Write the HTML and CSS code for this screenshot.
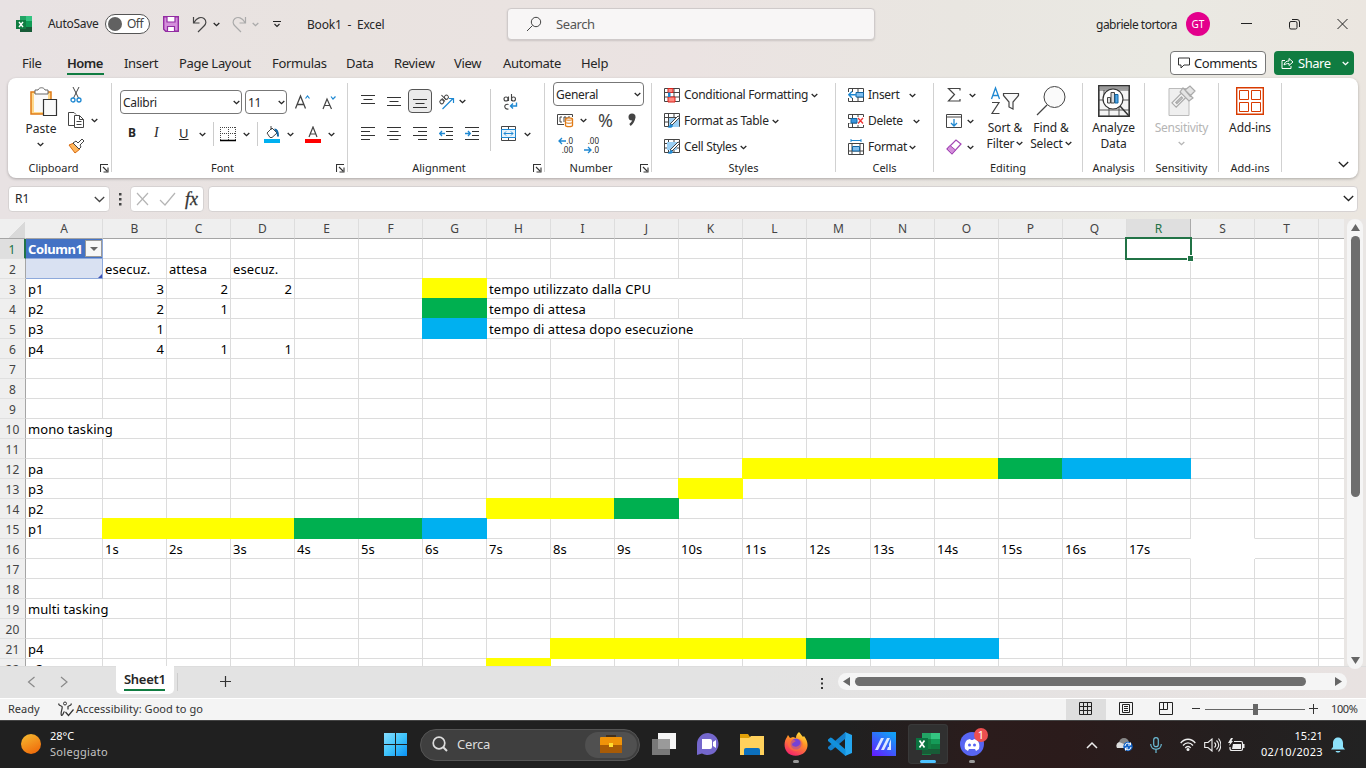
FILE: index.html
```html
<!DOCTYPE html>
<html lang="en">
<head>
<meta charset="utf-8">
<title>Book1 - Excel</title>
<link rel="stylesheet" href="styles.css">
</head>
<body>
<svg class="defs">
<symbol id="chev" viewBox="0 0 7 5"><path d="M.7 1 3.5 3.7 6.3 1" fill="none" stroke="currentColor" stroke-width="1.3"/></symbol>
<symbol id="launch" viewBox="0 0 9 9"><path d="M.5 8V.5H8M3 3l4 4M8 3.5V8H3.5" fill="none" stroke="#333" stroke-width="1.1"/></symbol>
<symbol id="grid" viewBox="0 0 16 15"><path d="M.5.5h15v13H.5zM.5 4.5h15M.5 9h15M4.5.5v13M10 .5v13" fill="none" stroke="#444"/></symbol>
</svg>

<header class="title">
  <svg class="xl" width="16" height="16"><path d="M4 0h8v16H4z" fill="#148345"/><path d="M10 0h6v5h-6z" fill="#34c481"/><path d="M4 0h6v5H4z" fill="#22a465"/><path d="M10 5h6v6h-6z" fill="#109b55"/><path d="M4 11h12v5H4z" fill="#175b37"/><path d="M0 4h10v9H0z" fill="#107c41"/><path d="m3 6 4 5M7 6l-4 5" stroke="#fff" stroke-width="1.4"/></svg>
  <span class="autosave">AutoSave</span>
  <span class="toggle"><i></i>Off</span>
  <svg class="save" width="16" height="16"><path d="M.7.7h14.6v14.6H2.7l-2-2z" fill="#d48fdb" stroke="#932ca3" stroke-width="1.4"/><path d="M4 1v5h8V1M4.500 15v-4.500h7V15" fill="#fff" stroke="#932ca3" stroke-width="1.2"/></svg>
  <svg class="undo" width="16" height="17"><path d="M1.500 1v6h6M2 6.500C5 1.500 9 .5 12 2.500c3 2.500 2 5.500 0 7.500l-6 6" fill="none" stroke="#444" stroke-width="1.2"/></svg>
  <svg class="c1" width="7" height="5"><use href="#chev"/></svg>
  <svg class="redo" width="16" height="17"><path d="M14.500 1v6h-6M14 6.500C11 1.500 7 .5 4 2.500c-3 2.500-2 5.500 0 7.500l6 6" fill="none" stroke="#aaa" stroke-width="1.2"/></svg>
  <svg class="c2" width="7" height="5"><use href="#chev"/></svg>
  <svg class="qat" width="9" height="7"><path d="M0 .5h8M1.500 3 4 5.500 6.500 3" fill="none" stroke="#222" stroke-width="1.1"/></svg>
  <span class="book">Book1&nbsp; -&nbsp; Excel</span>
  <div class="search"><svg width="17" height="17"><circle cx="10" cy="6" r="4.700" fill="none" stroke="#444"/><path d="M6.500 9.500 1 15" stroke="#444"/></svg><span>Search</span></div>
  <span class="user">gabriele tortora</span><span class="avatar">GT</span>
  <svg class="win" width="108" height="12"><path d="M0 5.500h11M96.500 1l10 10M106.500 1l-10 10" stroke="#222" fill="none"/><rect x="48.500" y="3.500" width="7.500" height="7.500" rx="1.500" fill="none" stroke="#222"/><path d="M51 1.500h5q2.500 0 2.500 2.500v5" fill="none" stroke="#222"/></svg>
</header>

<nav class="tabs">
  <span>File</span><span class="on">Home</span><span>Insert</span><span>Page Layout</span><span>Formulas</span><span>Data</span><span>Review</span><span>View</span><span>Automate</span><span>Help</span>
  <button class="comments"><svg width="12" height="12"><path d="M.5 1h11v7H6l-3 3V8H.500z" fill="none" stroke="#333"/></svg>Comments</button>
  <button class="share"><svg width="13" height="12"><path d="M4 3.500H1v8h9V9M3 8c.5-3 2.500-4 5-4V1.500L12 5 8 8.500V6.500C6 6.500 4.500 7 3 8z" fill="none" stroke="#fff"/></svg>Share<svg width="7" height="5"><use href="#chev"/></svg></button>
</nav>

<section class="ribbon">
  <div class="group g-clip">
    <div class="body">
      <div class="paste"><svg width="28" height="30"><path d="M1 5h20v22H1z" fill="#ffd98c" stroke="#e07b16" stroke-width="1.500"/><path d="M4 7h14v18H4z" fill="#fafafa"/><path d="M5 7V3h3c1-3 6-3 7 0h3v4z" fill="#fff" stroke="#666"/><path d="M13.500 12.500h13v16h-13z" fill="#fafafa" stroke="#333" stroke-width="1.200"/></svg><span>Paste</span><svg width="7" height="5"><use href="#chev"/></svg></div>
      <div class="clipcol">
        <svg width="12" height="16"><path d="M3 0l5.500 11M9 0 3.500 11" stroke="#444" fill="none"/><circle cx="3" cy="13" r="2" fill="#fff" stroke="#1e88d2" stroke-width="1.300"/><circle cx="9" cy="13" r="2" fill="#fff" stroke="#1e88d2" stroke-width="1.300"/></svg>
        <div class="copy"><svg width="17" height="17"><path d="M6 13.500H.500V.5H6l2 2M6.500 3.500h5l4 4v8h-9zM11.500 3.500v4h4M8.500 9.500h5M8.500 12.500h5" fill="none" stroke="#444"/></svg><svg width="7" height="5"><use href="#chev"/></svg></div>
        <svg width="17" height="16"><path d="m1 7 5-2 6 6-5 4z" fill="#ffb65c" stroke="#d8690e"/><path d="m5 5 3-2 2 2 4-4 2 2-4 4 1 2-2 2z" fill="#fff" stroke="#444"/></svg>
      </div>
    </div>
    <div class="label">Clipboard<svg width="9" height="9"><use href="#launch"/></svg></div>
  </div>

  <div class="group g-font">
    <div class="body">
      <div class="row f1"><span class="select">Calibri<svg width="7" height="5"><use href="#chev"/></svg></span><span class="select">11<svg width="7" height="5"><use href="#chev"/></svg></span>
      <svg width="17" height="16"><path d="M.500 14.500 5.500 2l5 12.500M2.500 10.500h6" fill="none" stroke="#444" stroke-width="1.300"/><path d="m10.500 4.500 2-2.500L14.500 4.500" fill="none" stroke="#1e88d2" stroke-width="1.200"/></svg>
      <svg width="16" height="16"><path d="M1 15 5 5l4.500 10M3 11.500h5" fill="none" stroke="#444" stroke-width="1.200"/><path d="m9 2.500 2 2.500 2.500-2.500" fill="none" stroke="#1e88d2" stroke-width="1.200"/></svg></div>
      <div class="row f2"><b>B</b><em>I</em><u>U</u><svg width="7" height="5"><use href="#chev"/></svg><i class="vr"></i>
      <svg width="16" height="16"><path d="M.500 1v13M15.500 1v13M8.500 1v13M0 1.500h16M0 7.500h16" stroke="#444" stroke-dasharray="1 1"/><path d="M0 14.500h16" stroke="#000" stroke-width="1.500"/></svg><svg width="7" height="5"><use href="#chev"/></svg><i class="vr"></i>
      <svg width="16" height="17"><path d="m3 7 5-5 5 5-5 4.500H6zM7 0v4" fill="none" stroke="#444"/><path d="M10.500 3.500c3 0 3.500 3 3.500 7" fill="none" stroke="#1266a3" stroke-width="2"/><path d="M0 13h16v4H0z" fill="#00b0f0"/></svg><svg width="7" height="5"><use href="#chev"/></svg>
      <svg width="16" height="17"><path d="M4 11 8 1l4 10M5.500 8h5" fill="none" stroke="#444" stroke-width="1.200"/><path d="M0 13h16v4H0z" fill="red"/></svg><svg width="7" height="5"><use href="#chev"/></svg></div>
    </div>
    <div class="label">Font<svg width="9" height="9"><use href="#launch"/></svg></div>
  </div>

  <div class="group g-align">
    <div class="body">
      <div class="al">
        <div class="row a1"><svg width="14" height="14"><path d="M0 1.500h14M2.500 5.500h9M0 9.500h14" stroke="#333"/></svg><svg width="14" height="14"><path d="M0 3.500h14M2.500 7.500h9M0 11.500h14" stroke="#333"/></svg><span class="picked"><svg width="14" height="14"><path d="M0 5.500h14M2.500 9.500h9M0 13.500h14" stroke="#333"/></svg></span>
        <svg width="17" height="17"><g transform="rotate(-45 7 7)" fill="none" stroke="#444"><circle cx="3.500" cy="6" r="2"/><path d="M6 3.500V8M8 1v7"/><circle cx="10" cy="6" r="2"/></g><path d="M4.500 16 15 5.500M11 5.500h4.500V10" fill="none" stroke="#1e88d2" stroke-width="1.200"/></svg><svg width="7" height="5"><use href="#chev"/></svg></div>
        <div class="row a2"><svg width="14" height="14"><path d="M0 1.500h14M0 5.500h9M0 9.500h14M0 13.500h9" stroke="#333"/></svg><svg width="14" height="14"><path d="M0 1.500h14M2.500 5.500h9M0 9.500h14M2.500 13.500h9" stroke="#333"/></svg><svg width="14" height="14"><path d="M0 1.500h14M5 5.500h9M0 9.500h14M5 13.500h9" stroke="#333"/></svg>
        <svg width="15" height="14"><path d="M0 1.500h14M7 5.500h7M7 9.500h7M0 13.500h14" stroke="#333"/><path d="M6 7.500H.800M3 5 .700 7.500 3 10" fill="none" stroke="#1e88d2" stroke-width="1.300"/></svg><svg width="15" height="14"><path d="M0 1.500h14M7 5.500h7M7 9.500h7M0 13.500h14" stroke="#333"/><path d="M0 7.500h5.300M3 5l2.300 2.500L3 10" fill="none" stroke="#1e88d2" stroke-width="1.300"/></svg></div>
      </div>
      <div class="ar">
        <svg class="wrap" width="16" height="17"><g fill="none" stroke="#444" stroke-width="1.100"><circle cx="3" cy="5" r="2"/><path d="M5.500 2.500V7M8.500 0v7M5.500 10.500c-5-1.500-5 5.500 0 4.500"/><circle cx="10.500" cy="5" r="2"/></g><path d="M13.500 8.500v3.500H7.500M10 9.500 7.500 12l2.500 2.500" fill="none" stroke="#1e88d2" stroke-width="1.400"/></svg>
        <div class="row"><svg width="16" height="16"><path d="M.500.500h14v14H.500zM.500 3.500h14M.500 11.500h14M7.500.500v3M7.500 11.500v3" fill="none" stroke="#444"/><path d="M.500 3.500h14v8H.500z" fill="#e7f3fb" stroke="#1e88d2"/><path d="M3 7.500h9M5 5.500l-2 2 2 2M10 5.500l2 2-2 2" fill="none" stroke="#1e88d2"/></svg><svg width="7" height="5"><use href="#chev"/></svg></div>
      </div>
    </div>
    <div class="label">Alignment<svg width="9" height="9"><use href="#launch"/></svg></div>
  </div>

  <div class="group g-num">
    <div class="body">
      <span class="select">General<svg width="7" height="5"><use href="#chev"/></svg></span>
      <div class="row n1"><svg width="17" height="15"><path d="M15.500 4V1.500H.500v10H7M5 4H3v5h2M7 9V4h2v3M11 6V4h2" fill="none" stroke="#444"/><path d="M8.500 6c0-1.500 7-1.500 7 0v6.500c0 1.500-7 1.500-7 0z" fill="#fff" stroke="#e07b16" stroke-width="1.300"/><path d="M8.500 6.500c1 1 6 1 7 0M8.500 9.500c1 1 6 1 7 0" fill="none" stroke="#e07b16"/></svg><svg width="7" height="5"><use href="#chev"/></svg><span class="pct">%</span><svg width="9" height="14"><circle cx="4" cy="4" r="3.500" fill="#444"/><path d="M6 4c0 4-1.500 6-4 8" fill="none" stroke="#444" stroke-width="2.300"/></svg></div>
      <div class="row n2"><div class="dec"><span><svg width="8" height="8"><path d="M8 4H1M4 1 1 4l3 3" fill="none" stroke="#1e88d2" stroke-width="1.300"/></svg>.0</span><span>.00</span></div><div class="dec"><span>.00</span><span><svg width="8" height="8"><path d="M0 4h7M4 1l3 3-3 3" fill="none" stroke="#1e88d2" stroke-width="1.300"/></svg>.0</span></div></div>
    </div>
    <div class="label">Number<svg width="9" height="9"><use href="#launch"/></svg></div>
  </div>

  <div class="group g-styles">
    <div class="body list">
      <div><svg width="16" height="15"><use href="#grid" width="16" height="15"/><path d="M4 .500h5v4H4zM4 9h7v5H4z" fill="#ff8a80" stroke="#d8231c"/><path d="M4 4.500h2.500V9H4z" fill="#1e88d2"/></svg><span>Conditional Formatting</span><svg width="7" height="5"><use href="#chev"/></svg></div>
      <div><svg width="17" height="16"><use href="#grid" width="16" height="15"/><path d="M5 5h10v9H5z" fill="#9cd0f5"/><path d="m16 4-8 8-2-1 8-8z" fill="#fff" stroke="#444"/><path d="M3.500 14c2 0 2-3 4-3l1.500 2c-1 2-3.500 2.500-5.500 1z" fill="#1e88d2"/></svg><span>Format as Table</span><svg width="7" height="5"><use href="#chev"/></svg></div>
      <div><svg width="17" height="16"><use href="#grid" width="16" height="15"/><path d="M3 3h10v8H3z" fill="#9cd0f5"/><path d="m16 4-8 8-2-1 8-8z" fill="#fff" stroke="#444"/><path d="M3.500 14c2 0 2-3 4-3l1.500 2c-1 2-3.500 2.500-5.500 1z" fill="#1e88d2"/></svg><span>Cell Styles</span><svg width="7" height="5"><use href="#chev"/></svg></div>
    </div>
    <div class="label">Styles</div>
  </div>

  <div class="group g-cells">
    <div class="body list">
      <div><svg width="16" height="15"><use href="#grid" width="16" height="15"/><path d="M0 4h9v6H0z" fill="#fff"/><path d="M8 4.500h7.500V9H8z" fill="#80bff0" stroke="#1266a3"/><path d="M8 6.800H1M4 3.500.800 6.800 4 10" fill="none" stroke="#1e88d2" stroke-width="1.400"/></svg><span>Insert</span><svg width="7" height="5"><use href="#chev"/></svg></div>
      <div><svg width="16" height="15"><use href="#grid" width="16" height="15"/><path d="M0 5h3v4H0zM9 3h7v8H9z" fill="#fff"/><path d="M3 4.500h6V9H3z" fill="#3a96dd" stroke="#1266a3"/><path d="m10 4 5 5.500M15 4l-5 5.500" stroke="#e33" stroke-width="1.300"/></svg><span>Delete</span><svg width="7" height="5"><use href="#chev"/></svg></div>
      <div><svg width="16" height="17"><path d="M3 1.500h10M3 0v3M13 0v3" stroke="#1e88d2"/><path d="M.500 4.500h15v11H.500zM.500 12h15M4 4.500v11M12 4.500v11" fill="none" stroke="#444"/><path d="M4.500 7.500h7V12h-7z" fill="#80bff0" stroke="#1266a3"/></svg><span>Format</span><svg width="7" height="5"><use href="#chev"/></svg></div>
    </div>
    <div class="label">Cells</div>
  </div>

  <div class="group g-edit">
    <div class="body">
      <div class="list ecol">
        <div><svg width="18" height="16"><path d="M14 3.500V1.500H2.500l6 6-6 6.500H14v-2" fill="none" stroke="#444" stroke-width="1.200"/></svg><svg width="7" height="5"><use href="#chev"/></svg></div>
        <div><svg width="16" height="15"><path d="M.500.500h15v13H.500zM.500 3h15" fill="none" stroke="#444"/><path d="M8 5v7M5 9l3 3 3-3" fill="none" stroke="#1e88d2" stroke-width="1.300"/></svg><svg width="7" height="5"><use href="#chev"/></svg></div>
        <div><svg width="16" height="16"><path d="m1 10 9-9 5 4-9 10z" fill="#fff" stroke="#a347b5" stroke-width="1.200"/><path d="m1 10 3-3.500 5.500 4.500L6 15z" fill="#d48fdb" stroke="#a347b5"/></svg><svg width="7" height="5"><use href="#chev"/></svg></div>
      </div>
      <div class="big sort"><svg width="30" height="32"><path d="M1.500 14 5.500 3l4 11M3 10.500h5.500" fill="none" stroke="#1e88d2" stroke-width="1.300"/><path d="M2 17.500h7L2 28.500h7.500" fill="none" stroke="#444" stroke-width="1.200"/><path d="M13.500 8.500h15v2L23 17v7l-4-2v-5l-5.500-6.500z" fill="#fafafa" stroke="#444" stroke-width="1.200"/></svg><span>Sort &amp;</span><span>Filter <svg width="7" height="5"><use href="#chev"/></svg></span></div>
      <div class="big find"><svg width="30" height="32"><circle cx="18.500" cy="12" r="10.500" fill="#fafafa" stroke="#444"/><path d="M11 20 1 30" stroke="#444" stroke-width="1.200"/></svg><span>Find &amp;</span><span>Select <svg width="7" height="5"><use href="#chev"/></svg></span></div>
    </div>
    <div class="label">Editing</div>
  </div>

  <div class="group g-an"><div class="body"><div class="big"><svg width="32" height="32"><path d="M1 1h30v30H1zM1 5h30M1 15h30M1 25h30M11 22v9M21 22v9M6 5v10" fill="#f4f4f4" stroke="#555"/><path d="M0 1.500h32v3H0z" fill="#999"/><path d="M.700.700h30.600v30.600H.700z" fill="none" stroke="#333" stroke-width="1.300"/><circle cx="15" cy="14" r="10" fill="#fff" stroke="#333" stroke-width="1.200"/><path d="m22 21 9 10" stroke="#333" stroke-width="1.500"/><path d="M9.500 12.500h3V18h-3zM13 7.500h3.500V18H13z" fill="#ddd" stroke="#444"/><path d="M17 9.500h3V18h-3z" fill="#51a7e8" stroke="#1266a3"/></svg><span>Analyze</span><span>Data</span></div></div><div class="label">Analysis</div></div>
  <div class="group g-sens"><div class="body"><div class="big"><svg width="28" height="32"><path d="M1 3.500h20v27H1z" fill="#efefef" stroke="#bbb"/><g transform="rotate(-45 11 15)" fill="#f4f4f4" stroke="#aaa" stroke-width="1.200"><path d="M4 12h14v6H4zM7 14.500h8v1.500H7z"/></g><path d="m12 7 3-4 10 10-4 3zM17 5l5-4 5 5-5 5z" fill="#e4e4e4" stroke="#aaa" stroke-width="1.200"/></svg><span>Sensitivity</span><svg width="7" height="5"><use href="#chev"/></svg></div></div><div class="label">Sensitivity</div></div>
  <div class="group g-add"><div class="body"><div class="big"><svg width="28" height="32"><path d="M.700 2.700h26.600v26.600H.700z" fill="#fff" stroke="#d83b01" stroke-width="1.400"/><path d="M3.500 5.500h9v9h-9zM15.500 5.500h9v9h-9zM3.500 17.500h9v9h-9zM15.500 17.500h9v9h-9z" fill="none" stroke="#d83b01"/></svg><span>Add-ins</span></div></div><div class="label">Add-ins</div></div>
  <svg class="collapse" width="11" height="7"><path d="m.800 1 4.700 4.500L10.200 1" fill="none" stroke="#222" stroke-width="1.300"/></svg>
</section>

<section class="fbar">
  <div class="namebox">R1<svg width="11" height="7"><path d="m.800 1 4.700 4.500L10.200 1" fill="none" stroke="#444" stroke-width="1.300"/></svg></div>
  <svg class="dots" width="3" height="13"><path d="M0 0h2.500v2.500H0zM0 5h2.500v2.500H0zM0 10h2.500v2.500H0z" fill="#444"/></svg>
  <div class="fx"><svg width="40" height="14"><path d="m1 1 11 12M12 1 1 13M24 8l5 5L39 1" fill="none" stroke="#b5b5b5" stroke-width="1.200"/></svg><i>fx</i></div>
  <div class="formula"><svg width="11" height="7"><path d="m.800 1 4.700 4.500L10.200 1" fill="none" stroke="#222" stroke-width="1.300"/></svg></div>
</section>

<main class="main">
  <div class="sheet" id="sheet"></div>
  <div class="vscroll"><svg width="9" height="7"><path d="M4.500 0 9 7H0z" fill="#666"/></svg><i></i><svg class="dn" width="9" height="7"><path d="M4.500 7 9 0H0z" fill="#666"/></svg></div>
</main>

<footer class="sheettabs">
  <svg class="navs" width="42" height="12"><path d="M7.500 1 1.500 6l6 5M34 1l6 5-6 5" fill="none" stroke="#8a8a8a" stroke-width="1.200"/></svg>
  <div class="stab"><span>Sheet1</span></div>
  <i class="sep"></i>
  <svg class="plus" width="12" height="12"><path d="M0 5.500h11M5.500 0v11" stroke="#333" stroke-width="1.200"/></svg>
  <svg class="dots2" width="2" height="11"><path d="M0 0h2v2H0zM0 4.500h2v2H0zM0 9h2v2H0z" fill="#333"/></svg>
  <div class="hscroll"><svg width="7" height="9"><path d="M0 4.500 7 0v9z" fill="#666"/></svg><i></i><svg width="7" height="9"><path d="M7 4.500 0 0v9z" fill="#666"/></svg></div>
</footer>

<footer class="status">
  <span class="ready">Ready</span>
  <svg width="16" height="16"><circle cx="7" cy="2.500" r="1.500" fill="none" stroke="#333"/><path d="M1 2.500c-1 2 2 2 3 3 1 2-2 6-.500 9 2 0 1.500-3 3-4M13 2.500c1 2-2 2-3 3v3M7.500 11l3 3.500 5-6" fill="none" stroke="#333" stroke-width="1.200"/></svg>
  <span class="acc">Accessibility: Good to go</span>
  <span class="view on"><svg width="13" height="13"><path d="M.500.500h12v12H.500zM.500 4.500h12M.500 8.500h12M4.500.500v12M8.500.500v12" fill="none" stroke="#222"/></svg></span>
  <span class="view"><svg width="14" height="13"><path d="M.500.500h13v12H.500zM3.500 2.500h7v8h-7zM5 4.500h4M5 6.500h4M5 8.500h4" fill="none" stroke="#222"/></svg></span>
  <span class="view"><svg width="14" height="13"><path d="M.500.500h13v12H.500zM.500 7.500h8v-7M4.500.500v7" fill="none" stroke="#222"/></svg></span>
  <svg class="zoom" width="127" height="12"><path d="M0 5.500h8M121.500 1v10M117 5.500h9" stroke="#333"/><path d="M13 6.500h100" stroke="#666"/><path d="M61 1h5v11h-5z" fill="#666"/></svg>
  <span class="zp">100%</span>
</footer>

<footer class="taskbar">
  <svg class="sun" width="20" height="20"><defs><linearGradient id="sg" x2=".5" y2="1"><stop stop-color="#f5bd32"/><stop offset="1" stop-color="#f0700d"/></linearGradient></defs><circle cx="10" cy="10" r="10" fill="url(#sg)"/></svg>
  <div class="weather"><span>28°C</span><span>Soleggiato</span></div>
  <svg class="start" width="24" height="24"><defs><linearGradient id="wg" x2="1" y2="1"><stop stop-color="#85dcff"/><stop offset=".5" stop-color="#3fc4fb"/><stop offset="1" stop-color="#0a91f5"/></linearGradient></defs><path d="M0 0h11v11H0zM12 0h11v11H12zM0 12h11v11H0zM12 12h11v11H12z" fill="url(#wg)"/></svg>
  <div class="tsearch"><svg width="16" height="16"><circle cx="7" cy="7" r="5.800" fill="none" stroke="#ddd" stroke-width="1.700"/><path d="m11 11 4 4" stroke="#ddd" stroke-width="2"/></svg><span>Cerca</span><div><svg width="22" height="18"><path d="M7 3V1h8v2" fill="none" stroke="#42301d" stroke-width="2"/><rect y="2" width="22" height="16" rx="1" fill="#ef9309"/><path d="M0 10h22v8H0z" fill="#a85b06"/><path d="M9 8h4v4H9z" fill="#ffdc31"/></svg></div></div>
  <div class="apps">
    <span><svg width="24" height="24"><path d="M6 1h18v16H6z" fill="#f5f5f5"/><path d="M0 7h18v16H0z" fill="#8a8a8a" opacity=".85"/></svg></span>
    <span><svg width="24" height="24"><path d="M12 1a11 11 0 1 1-6 20.500L1 23V12A11 11 0 0 1 12 1z" fill="#7467cc"/><path d="M6 7h8q2 0 2 2v6q0 2-2 2H6zM17 10l3-2v8l-3-2z" fill="#fff"/></svg></span>
    <span><svg width="24" height="24"><path d="M0 2h8l2 3h14v18H0z" fill="#e1a008"/><path d="M0 6h9l2-2h13v19H0z" fill="#ffd15c"/><path d="M4 23v-5q0-2 2-2h12q2 0 2 2v5z" fill="#0c70be"/></svg></span>
    <span class="run"><svg width="24" height="24"><defs><linearGradient id="fg" x1=".8" x2=".3" y2="1"><stop stop-color="#ffe93f"/><stop offset=".4" stop-color="#ff9526"/><stop offset="1" stop-color="#f5226d"/></linearGradient></defs><path d="M15 0c2 2 3 4 4 5l1-1c4 5 5 11 1 16-5 5-14 5-18 0C-.500 16 0 9 3 5l1-2 2 3 3-1 3 1c0-3 1-4 3-6z" fill="url(#fg)"/><circle cx="12" cy="12" r="5.500" fill="#7542d5"/><path d="M4 7c4-1 5 1 8 2l-3 2c-3 2 2 5 5 3 4-2 2-6 0-7 5 0 6 6 4 9-5 6-13 2-14-3z" fill="#ff7139" opacity=".6"/></svg></span>
    <span><svg width="24" height="24"><path d="m17 0 7 3v18l-7 3z" fill="#25a7f0"/><path d="M17.500 0v6.500L4 18l-1.500.500L0 16.500V15z" fill="#1480cc"/><path d="M17.500 24v-6.500L4 6l-1.500-.500L0 7.500V9z" fill="#1290dc"/></svg></span>
    <span><svg width="24" height="24"><defs><linearGradient id="mg" x2=".7" y1="1" y2="0"><stop stop-color="#6617ff"/><stop offset="1" stop-color="#139df6"/></linearGradient></defs><path d="M0 0h24v24H0z" fill="url(#mg)"/><path d="m3 18 6-12h3L6 18zM9 18l6-12h3l-6 12zM17 12l2-5v11h-4l1-3h1z" fill="#dce7ff"/></svg></span>
    <span class="active"><svg width="24" height="24"><path d="M6 1h9v22H6z" fill="#148345"/><path d="M15 1h9v6h-9z" fill="#34c481"/><path d="M6 1h9v6H6z" fill="#22a465"/><path d="M15 7h9v5h-9z" fill="#159b58"/><path d="M6 17h18v5H6z" fill="#185c37"/><path d="M15 12h9v5h-9z" fill="#107c41"/><path d="M0 6h12v12H0z" fill="#0b7340"/><path d="m3.500 8.500 5 7M8.500 8.500l-5 7" stroke="#fff" stroke-width="1.700"/></svg></span>
    <span class="run discord"><svg width="24" height="24"><circle cx="12" cy="12" r="12" fill="#5865f2"/><path d="M5 17c-1-4 0-7 2-9l3-1 1 1h2l1-1 3 1c2 2 3 5 2 9l-3 2-1-2H9l-1 2z" fill="#fff"/><circle cx="9.500" cy="13" r="1.500" fill="#5865f2"/><circle cx="14.500" cy="13" r="1.500" fill="#5865f2"/></svg><b>1</b></span>
  </div>
  <svg class="up" width="12" height="8"><path d="m1 7 5-5 5 5" fill="none" stroke="#eee" stroke-width="1.500"/></svg>
  <svg class="cloud" width="18" height="15"><circle cx="8" cy="6" r="5" fill="#888"/><path d="M1 11q-2-4 2-6l5 2 4 1v3z" fill="#ddd"/><circle cx="12" cy="9.500" r="4.700" fill="#1464c8"/><path d="M9 9a3 3 0 0 1 5.500-1.500M15 10a3 3 0 0 1-5.500 1.500M14.500 5.500v2.500H12M9.500 13.500V11H12" fill="none" stroke="#fff"/></svg>
  <svg class="mic" width="12" height="16"><rect x="3.700" y=".7" width="4.600" height="9" rx="2.300" fill="none" stroke="#6cbcd6" stroke-width="1.200"/><path d="M.700 7c0 7 10.600 7 10.600 0M6 12.500V16" fill="none" stroke="#6cbcd6" stroke-width="1.200"/></svg>
  <svg class="wifi" width="16" height="13"><path d="M.700 5c4-5 10.600-5 14.600 0M3 7.500c3-3.500 7-3.500 10 0M5.300 10c1.500-2 4-2 5.400 0" fill="none" stroke="#eee" stroke-width="1.300"/><circle cx="8" cy="11.500" r="1.500" fill="#eee"/></svg>
  <svg class="vol" width="17" height="14"><path d="M.700 4.500H4L8 1v12L4 9.500H.700zM10.500 4.500c1.500 1.500 1.500 3.500 0 5M12.500 2.500c3 3 3 6 0 9M14.500.500c3 4 3 9 0 13" fill="none" stroke="#eee" stroke-width="1.100"/></svg>
  <svg class="bat" width="17" height="14"><path d="M6 3.500h7q1.500 0 1.500 1.500v6q0 1.500-1.500 1.500H4q-2 0-2-2V9" fill="none" stroke="#eee" stroke-width="1.200"/><path d="M5 6h8v5H4zM15 6h1.500v4H15zM3 0 0 5h2L1 8l4-5H3.500L5 0z" fill="#eee"/></svg>
  <div class="clock"><span>15:21</span><span>02/10/2023</span></div>
  <svg class="bell" width="14" height="16"><path d="M0 12.500 2 10V6C2-1.500 12-1.500 12 6v4l2 2.500zM4.500 14h5c-1 2-4 2-5 0z" fill="#8de2fb"/></svg>
</footer>
<script src="sheet.js"></script>
</body>
</html>
```
FILE: sheet.js
```js
const letters = "ABCDEFGHIJKLMNOPQRST".split("").concat("");
const cells = {
  A1: "Column1", B2: "esecuz.", C2: "attesa", D2: "esecuz.",
  A3: "p1", B3: 3, C3: 2, D3: 2, A4: "p2", B4: 2, C4: 1, A5: "p3", B5: 1,
  A6: "p4", B6: 4, C6: 1, D6: 1,
  H3: "tempo utilizzato dalla CPU", H4: "tempo di attesa", H5: "tempo di attesa dopo esecuzione",
  A10: "mono tasking", A12: "pa", A13: "p3", A14: "p2", A15: "p1",
  A19: "multi tasking", A21: "p4", A22: "p3"
};
for (let i = 1; i < 18; i++) cells[letters[i] + 16] = i + "s";

// row, first column, last column, colour
const fills = [
  [3, "G", "G", "yellow"], [4, "G", "G", "green"], [5, "G", "G", "blue"],
  [12, "L", "O", "yellow"], [12, "P", "P", "green"], [12, "Q", "R", "blue"],
  [13, "K", "K", "yellow"], [14, "H", "I", "yellow"], [14, "J", "J", "green"],
  [15, "B", "D", "yellow"], [15, "E", "F", "green"], [15, "G", "G", "blue"],
  [21, "I", "L", "yellow"], [21, "M", "M", "green"], [21, "N", "O", "blue"],
  [22, "H", "H", "yellow"]
];
// cells whose right gridline is covered by neighbouring text
const open = ["H3", "I3", "J3", "H4", "H5", "I5", "J5", "K5", "A10", "A19", "R16", "S16"];
const noBottom = ["S15", "S16"];

const sheet = document.getElementById("sheet");
const add = (parent, tag, cls, text) => {
  const el = document.createElement(tag);
  el.className = cls;
  if (text !== undefined) el.textContent = text;
  parent.appendChild(el);
  return el;
};
const head = add(sheet, "div", "line head");
add(head, "span", "corner");
letters.forEach(l => add(head, "span", l === "R" ? "col sel" : "col", l));
for (let r = 1; r <= 22; r++) {
  const line = add(sheet, "div", "line");
  add(line, "span", r === 1 ? "num sel" : "num", r);
  letters.forEach(l => {
    const key = l + r, v = cells[key];
    const c = add(line, "span", "cell");
    const fill = l && fills.find(f => f[0] === r && l >= f[1] && l <= f[2]);
    if (fill) c.classList.add(fill[3]);
    if (typeof v === "number") c.classList.add("right");
    if (open.includes(key)) c.classList.add("open");
    if (noBottom.includes(key)) c.classList.add("nobottom");
    if (key === "A1") c.classList.add("th");
    if (key === "A2") c.classList.add("tb");
    if (key === "R1") c.classList.add("cursor");
    if (v !== undefined) add(c, "span", "val", v);
    if (key === "A1") add(c, "i", "filter");
  });
}
```
FILE: styles.css
```css
* { box-sizing: border-box; }
body { margin: 0; width: 1366px; height: 768px; overflow: hidden; font: 12px/16px "Noto Sans", "Open Sans", sans-serif; color: #262626; background: linear-gradient(90deg, #e8e2e3 0, #e9e3e0 25%, #ebe3e2 50%, #e9e6e1 70%, #eae9e3 85%, #ebe6e0 100%); display: flex; flex-direction: column; }
svg { display: block; flex: none; }
.defs { display: none; }
span { white-space: nowrap; }
.title { height: 48px; display: flex; align-items: center; flex: none; padding-left: 16px; }
.autosave { width: 57px; margin-left: 16px; letter-spacing: -.3px; }
.toggle { width: 45px; height: 20px; border: 1px solid #555; border-radius: 10px; background: #fff; display: flex; align-items: center; padding-left: 2px; gap: 5px; letter-spacing: -.5px; color: #444; margin-top: -1px; }
.toggle i { width: 14px; height: 14px; border-radius: 50%; background: #616161; }
.save { margin-left: 13px; }
.undo { margin-left: 13px; }
.c1 { margin-left: 5px; }
.redo { margin-left: 11px; }
.c2 { margin-left: 5px; color: #aaa; }
.qat { margin-left: 14px; }
.book { margin-left: 25px; width: 201px; letter-spacing: -.2px; padding-top: 2px; }
.search { width: 368px; height: 32px; margin-left: -1px; background: #f8f6f6; border: 1px solid #cfcaca; border-radius: 4px; display: flex; align-items: center; padding-left: 18px; box-shadow: 0 1px 2px #0002; font-size: 13px; gap: 13px; color: #555; letter-spacing: -.4px; }
.user { margin-left: 221px; width: 90px; padding-top: 2px; letter-spacing: -.5px; }
.avatar { width: 24px; height: 24px; border-radius: 50%; background: #e3008c; color: #fff; font-size: 10px; line-height: 24px; text-align: center; }
.win { margin-left: 31px; }
.tabs { height: 30px; flex: none; display: grid; grid-template-columns: 45px 57px 55px 93px 74px 48px 60px 49px 78px 589px 104px auto; padding-left: 22px; font-size: 13px; line-height: 30px; letter-spacing: -.3px; }
.tabs .on { font-weight: 600; width: 37px; height: 27px; border-bottom: 2px solid #107c41; letter-spacing: -.5px; }
.tabs button { font: 13px "Noto Sans"; letter-spacing: -.45px; height: 24px; margin-top: 3px; border-radius: 4px; display: flex; align-items: center; padding: 0 7px; gap: 4px; }
.comments { width: 96px; border: 1px solid #777; background: #fff; color: #222; }
.share { width: 80px; background: #107c41; border: 0; color: #fff; }
.share svg:last-child { margin-left: 7px; }
.ribbon { height: 100px; flex: none; margin: 0 8px; background: #fff; border-radius: 8px; box-shadow: 0 1px 3px #0004; display: flex; padding-top: 5px; }
.group { height: 89px; border-right: 1px solid #d1d1d1; display: flex; flex-direction: column; flex: none; }
.body { height: 77px; display: flex; }
.label { height: 12px; line-height: 15px; font-size: 11px; text-align: center; position: relative; }
.label svg { position: absolute; right: 2px; top: 4px; }
.row { display: grid; align-items: center; height: 24px; }
.g-clip { width: 104px; }
.g-clip .label { padding-right: 12px; }
.paste { width: 60px; padding-left: 6px; display: flex; flex-direction: column; align-items: center; padding-top: 4px; }
.paste svg:first-child { margin-left: 6px; }
.paste span { margin: 5px 0 6px; line-height: 14px; }
.paste svg:last-child { margin-right: 2px; }
.clipcol { padding: 4px 0 0; display: flex; flex-direction: column; gap: 9px; }
.clipcol > svg:first-child { margin-left: 2px; }
.copy { display: flex; align-items: center; gap: 6px; }
.g-font { width: 236px; }
.g-font .label, .g-align .label, .g-num .label { padding-right: 14px; }
.g-font .body { flex-direction: column; padding: 7px 0 0 8px; gap: 8px; }
.f1 { grid-template-columns: 125px 50px 27px 20px; }
.f1 > svg { margin-top: -1px; }
.select { height: 24px; border: 1px solid #777; border-radius: 4px; padding: 0 2px; line-height: 21px; display: flex; justify-content: space-between; align-items: center; letter-spacing: -.3px; }
.f1 .select:nth-child(1) { width: 122px; padding-right: 1px; }
.f1 .select:nth-child(2) { width: 42px; padding-right: 1px; }
.f2 { grid-template-columns: 26px 25px 20px 14px 7px 23px 14px 7px 23px 18px 23px 8px; padding-left: 8px; font-size: 13px; }
.f2 > b, .f2 > em, .f2 > u { line-height: 22px; margin-top: -2px; }
.f2 b { font-size: 12px; }
.f2 em { font-family: "Liberation Serif", serif; font-size: 14px; }
.vr { width: 1px; height: 24px; background: #ccc; }
.g-align { width: 197px; }
.al { width: 143px; height: 62px; margin-top: 6px; border-right: 1px solid #ccc; padding: 0 0 0 13px; }
.a1 { grid-template-columns: 26px 21px 30px 21px 8px; }
.a2 { grid-template-columns: 26px 26px 26px 26px 15px; margin-top: 8px; }
.picked { width: 24px; height: 24px; border: 1px solid #555; border-radius: 4px; background: #ebebeb; padding: 4px; }
.ar { padding: 11px 0 0 10px; }
.ar .wrap { margin-left: 2px; }
.ar .row { grid-template-columns: 23px 8px; margin-top: 11px; }
.g-num { width: 107px; }
.g-num .body { flex-direction: column; padding-left: 8px; }
.g-num .select { width: 91px; margin-top: -1px; flex: none; }
.n1 { grid-template-columns: 23px 18px 30px 10px; padding-left: 4px; margin-top: 2px; }
.pct { font-size: 18px; color: #444; }
.n2 { grid-template-columns: 26px 20px; padding-left: 2px; margin-top: 1px; }
.dec { width: 18px; display: flex; flex-direction: column; align-items: flex-end; font-size: 8px; line-height: 8px; gap: 1px; }
.dec span { display: flex; }
.g-styles { width: 184px; }
.list { display: flex; flex-direction: column; }
.list > div { height: 26px; display: flex; align-items: center; gap: 4px; }
.g-styles .list, .g-cells .list { padding-left: 12px; margin-top: -1px; height: 78px; letter-spacing: -.3px; }
.g-styles .list > div { gap: 3px; }
.g-styles .list span { padding-left: 1px; }
.list svg:first-child { width: 16px; }
.g-cells { width: 98px; }
.g-cells .list > div { display: grid; grid-template-columns: 16px 37px 8px; }
.g-cells .list > div:nth-child(2) { grid-template-columns: 16px 41px 8px; }
.g-edit { width: 149px; }
.ecol { width: 48px; padding-left: 12px; margin-top: -1px; }
.ecol > div { gap: 7px; }
.ecol > div:not(:first-child) { gap: 5px; }
.big { display: flex; flex-direction: column; align-items: center; line-height: 16px; width: 46px; padding-top: 2px; letter-spacing: -.1px; }
.big > svg:first-child { margin-bottom: 3px; }
.big span svg { display: inline; vertical-align: 2px; margin-left: -1px; }
.g-an { width: 62px; }
.g-an .big { width: 61px; }
.g-sens { width: 74px; }
.g-sens .big { width: 73px; color: #b5b5b5; letter-spacing: -.3px; }
.g-sens .big svg:last-child { margin-top: 5px; }
.g-add { width: 63px; }
.g-add .big { width: 63px; }
.collapse { margin: 78px 0 0 56px; }
.fbar { height: 41px; flex: none; padding: 8px 8px 0; display: flex; }
.fbar > div { height: 26px; background: #fff; border: 1px solid #d6d2d2; border-radius: 4px; }
.namebox { width: 102px; display: flex; align-items: center; justify-content: space-between; padding: 0 4px 0 6px; }
.dots { margin: 7px 8px 0 9px; }
.fx { width: 74px; padding: 5px 0 0 5px; display: flex; gap: 9px; margin-right: 4px; }
.fx i { font: italic 18px/14px "Liberation Serif", serif; color: #333; -webkit-text-stroke: .3px #333; }
.formula { flex: 1; padding: 8px 3px 0; display: flex; justify-content: flex-end; }
.main { height: 447px; flex: none; display: flex; gap: 3px; background: #e9e6e4; }
.sheet { width: 1344px; height: 447px; overflow: hidden; background: #fff; }
.line { display: grid; grid-template-columns: 26px 77px repeat(20, 64px); grid-template-rows: 20px; height: 20px; width: 1500px; }
.head { color: #444; text-align: center; font-size: 12px; line-height: 19px; }
.head span { background: #efefef; border-right: 1px solid #ddd; border-bottom: 1px solid #a5a5a5; }
.head .sel { background: #dfdfdf; color: #217346; border-color: #aaa; }
.head .corner { background: linear-gradient(135deg, #efefef 62%, #d9d9d9 62%); border-right-color: #efefef; }
.num { background: #efefef; border-right: 1px solid #a5a5a5; border-bottom: 1px solid #e0e0e0; text-align: center; color: #444; line-height: 21px; letter-spacing: .2px; }
.num.sel { background: #dfdfdf; color: #217346; border-right: 2px solid #217346; }
.cell { border-right: 1px solid #dcdcdc; border-bottom: 1px solid #dcdcdc; padding: 0 2px; line-height: 21px; font-size: 13px; color: #000; position: relative; min-width: 0; }
.val { position: relative; z-index: 3; letter-spacing: .08px; }
.right { text-align: right; }
.open { border-right-color: transparent; }
.nobottom { border-bottom-color: transparent; }
.yellow { background: #ff0; border-color: #ff0; box-shadow: -1px -1px #ff0, 0 -1px #ff0, -1px 0 #ff0; }
.green { background: #00b050; border-color: #00b050; box-shadow: -1px -1px #00b050, 0 -1px #00b050, -1px 0 #00b050; }
.blue { background: #00b0f0; border-color: #00b0f0; box-shadow: -1px -1px #00b0f0, 0 -1px #00b0f0, -1px 0 #00b0f0; }
.th { background: #4472c4; border-color: #8ea9db; color: #fff; font-weight: 700; display: flex; justify-content: space-between; padding-right: 0; }
.th .val { letter-spacing: -.4px; }
.tb { background: #d9e1f2; border-color: #8ea9db; }
.tb::after { content: ""; position: absolute; right: 0; bottom: 0; border: 2px solid #3f51b5; border-left-color: transparent; border-top-color: transparent; }
.filter { width: 17px; height: 17px; margin-top: 1px; background: #f7f7f7; border: 1px solid #999; position: relative; flex: none; }
.filter::after { content: ""; position: absolute; left: 4px; top: 6px; border: 4px solid transparent; border-top-color: #666; border-bottom: 0; }
.cursor::before { content: ""; box-sizing: border-box; position: absolute; left: -2px; top: -2px; width: 67px; height: 23px; border: 2px solid #217346; z-index: 4; }
.cursor::after { content: ""; box-sizing: border-box; position: absolute; right: -4px; bottom: -4px; width: 7px; height: 7px; background: #217346; border: 1px solid #fff; z-index: 5; }
.vscroll { width: 16px; height: 450px; background: #f5f5f5; border-radius: 8px; display: flex; flex-direction: column; align-items: center; padding-top: 5px; position: relative; z-index: 2; }
.vscroll i { width: 9px; height: 261px; background: #6e6e6e; border-radius: 5px; margin: 5px 0 160px; }
.sheettabs { height: 33px; flex: none; background: linear-gradient(90deg, #e3e3e3 55%, #e8e2e1); border-top: 1px solid #ddd; border-bottom: 1px solid #fff; display: flex; }
.navs { margin: 9px 0 0 27px; }
.stab { width: 58px; height: 28px; margin-left: 47px; margin-top: -1px; background: #fff; border-radius: 0 0 5px 5px; padding: 5px 8px; }
.stab span { display: block; width: 41px; height: 20px; font-weight: 600; font-size: 13px; line-height: 17px; border-bottom: 2px solid #107c41; letter-spacing: -.3px; }
.sep { width: 1px; height: 18px; margin: 6px 0 0 3px; background: #ccc; }
.plus { margin: 9px 0 0 42px; }
.dots2 { margin: 11px 0 0 589px; }
.hscroll { margin: 6px 0 0 15px; width: 509px; height: 17px; border-radius: 9px; background: #f5f5f5; display: flex; align-items: center; padding-left: 5px; }
.hscroll i { width: 451px; height: 9px; background: #6e6e6e; border-radius: 5px; margin: 0 29px 0 5px; }
.status { height: 21px; flex: none; background: #f4f4f4; display: flex; align-items: center; padding: 0 0 2px 8px; font-size: 11px; color: #333; }
.ready { width: 50px; flex: none; }
.acc { width: 992px; flex: none; padding-left: 2px; letter-spacing: .05px; }
.view { width: 40px; height: 21px; display: flex; align-items: center; justify-content: center; flex: none; margin-bottom: -2px; padding: 0 1px 2px 0; }
.view.on { background: #dedede; }
.zoom { margin-left: 6px; }
.zp { margin-left: 12px; letter-spacing: -.4px; }
.taskbar { height: 48px; flex: none; background: linear-gradient(90deg, #202020 62%, #2b1c1c 72%, #2b1b1b 78%, #241f1f 90%, #222); border-top: 1px solid #444; display: flex; align-items: center; color: #fff; font-size: 11px; }
.sun { margin: -2px 0 0 21px; }
.weather { width: 334px; margin-left: 9px; margin-top: -1px; display: flex; flex-direction: column; letter-spacing: .3px; }
.weather span:first-child { letter-spacing: 0; }
.weather span:last-child { color: #c4c4c4; }
.tsearch { width: 220px; height: 32px; margin-left: 12px; border: 1px solid #555; border-radius: 16px; background: #3f3f3f; display: flex; align-items: center; padding-left: 11px; color: #ddd; font-size: 13px; }
.tsearch > svg { margin-top: -2px; }
.tsearch span { width: 128px; margin-left: 9px; letter-spacing: -.2px; margin-top: -1px; }
.tsearch div { width: 52px; height: 26px; background: #505050; border-radius: 13px; padding: 3px 15px; }
.apps { display: flex; margin-left: 4px; gap: 4px; margin-top: -1px; }
.apps span { width: 40px; height: 40px; padding: 8px; position: relative; }
.apps .active { background: #303030; border-radius: 4px; box-shadow: inset 0 0 0 1px #393939; }
.run::after, .active::after { content: ""; position: absolute; bottom: 1px; left: 17px; width: 6px; height: 3px; border-radius: 2px; background: #999; }
.active::after { left: 12px; width: 16px; background: #4cc2ff; }
.discord b { position: absolute; left: 22px; top: 4px; width: 14px; height: 14px; border-radius: 50%; background: #ec4f50; text-align: center; font: 11px/14px "Noto Sans"; }
.up { margin-left: 94px; }
.cloud { margin-left: 18px; }
.mic { margin-left: 16px; }
.wifi { margin-left: 18px; }
.vol { margin-left: 8px; }
.bat { margin-left: 7px; }
.clock { width: 78px; margin-top: -1px; display: flex; flex-direction: column; text-align: right; letter-spacing: .35px; }
.clock span:first-child { letter-spacing: .1px; }
.bell { margin-left: 8px; }
```
